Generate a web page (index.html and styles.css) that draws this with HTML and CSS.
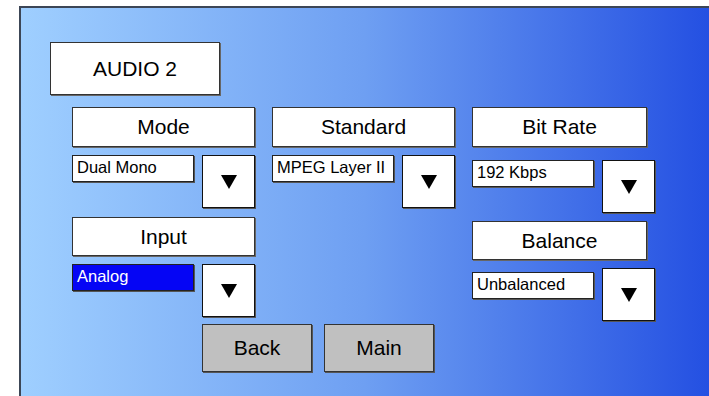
FILE: index.html
```html
<!DOCTYPE html>
<html lang="en">
<head>
    <meta charset="UTF-8">
    <meta name="viewport" content="width=device-width, initial-scale=1.0">
    <title>Audio 2</title>
    <link rel="stylesheet" href="styles.css">
</head>
<body>
    <div class="panel">
        <div class="title">AUDIO 2</div>

        <div class="grid">
            <div class="col">
                <div class="label">Mode</div>
                <div class="pick">
                    <div class="field">Dual Mono</div>
                    <div class="drop"><span class="arrow"></span></div>
                </div>
                <div class="label second">Input</div>
                <div class="pick">
                    <div class="field active">Analog</div>
                    <div class="drop"><span class="arrow"></span></div>
                </div>
            </div>

            <div class="col">
                <div class="label">Standard</div>
                <div class="pick">
                    <div class="field">MPEG Layer II</div>
                    <div class="drop"><span class="arrow"></span></div>
                </div>
            </div>

            <div class="col right">
                <div class="label">Bit Rate</div>
                <div class="pick">
                    <div class="field">192 Kbps</div>
                    <div class="drop"><span class="arrow"></span></div>
                </div>
                <div class="label second">Balance</div>
                <div class="pick">
                    <div class="field">Unbalanced</div>
                    <div class="drop"><span class="arrow"></span></div>
                </div>
            </div>
        </div>

        <div class="buttons">
            <button class="btn">Back</button>
            <button class="btn">Main</button>
        </div>
    </div>
</body>
</html>
```

FILE: styles.css
```css
body{
    margin: 0;
    background-color: white;
    font-family: "Liberation Sans", Arial, sans-serif;
    color: black;
    overflow: hidden;
}
.panel{
    margin-left: 19px;
    margin-top: 6px;
    height: calc(100vh - 6px);
    border-top: solid 2px #3c4656;
    border-left: solid 2px #3c4656;
    background: linear-gradient(to right, #9fcfff, #6e9ff2 50%, #2450e2);
    padding: 34px 0 0 29px;
    box-sizing: border-box;
}
.title{
    width: 170px;
    height: 53px;
    box-sizing: border-box;
    background-color: white;
    border: solid 1px #333;
    box-shadow: 1px 1px 0 #666;
    font-size: 21px;
    line-height: 51px;
    text-align: center;
}
.grid{
    display: grid;
    grid-template-columns: 184px 184px 184px;
    column-gap: 16px;
    margin-top: 12px;
    margin-left: 22px;
}
.col{
    display: flex;
    flex-direction: column;
}
.label{
    width: 183px;
    height: 40px;
    box-sizing: border-box;
    background-color: white;
    border: solid 1px #333;
    box-shadow: 1px 1px 0 #666;
    font-size: 21px;
    line-height: 38px;
    text-align: center;
    margin-bottom: 8px;
}
.label.second{
    margin-top: 9px;
    height: 39px;
    line-height: 37px;
}
.right .label{
    width: 175px;
}
.right .label:first-child{
    margin-bottom: 13px;
}
.right .label.second{
    margin-top: 8px;
}
.pick{
    display: flex;
    align-items: flex-start;
    gap: 8px;
}
.right .pick:last-child .field{
    margin-top: 4px;
}
.field{
    width: 122px;
    height: 27px;
    box-sizing: border-box;
    background-color: white;
    border: solid 1px #222;
    box-shadow: 1px 1px 0 #555;
    font-size: 16.5px;
    line-height: 23px;
    padding-left: 4px;
    white-space: nowrap;
}
.field.active{
    background-color: #0505f5;
    color: white;
}
.drop{
    width: 53px;
    height: 53px;
    box-sizing: border-box;
    background-color: white;
    border: solid 1px #111;
    box-shadow: 1px 1px 0 #555;
    display: flex;
    align-items: center;
    justify-content: center;
}
.arrow{
    width: 0;
    height: 0;
    border-left: solid 8px transparent;
    border-right: solid 8px transparent;
    border-top: solid 14px black;
    margin-top: 1px;
}
.buttons{
    display: flex;
    gap: 12px;
    margin-top: 3px;
    margin-left: 152px;
}
.btn{
    width: 110px;
    height: 48px;
    background-color: #c0c0c0;
    border: solid 1px #333;
    box-shadow: 1px 1px 0 #555;
    font-family: "Liberation Sans", Arial, sans-serif;
    font-size: 21px;
    color: black;
    padding: 0;
}
```
